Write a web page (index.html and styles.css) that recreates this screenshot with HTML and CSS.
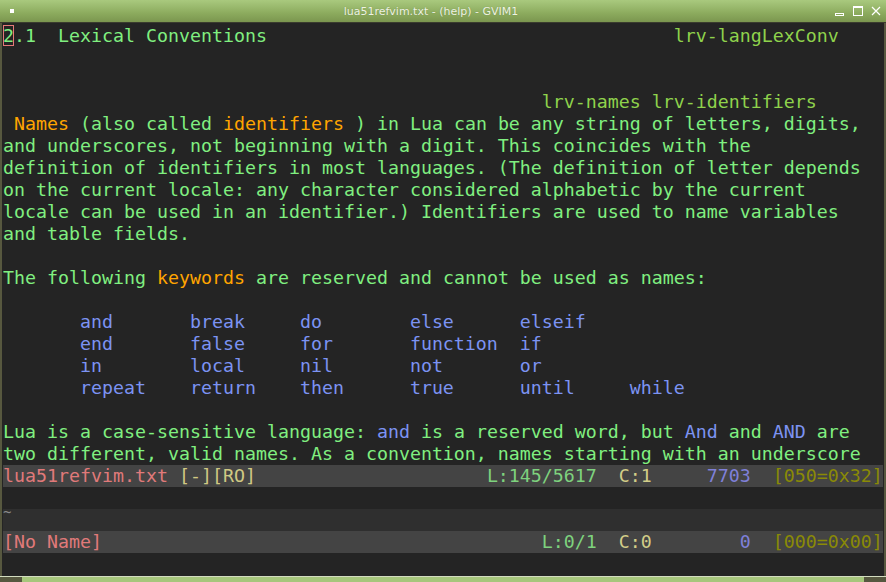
FILE: index.html
```html
<!DOCTYPE html>
<html>
<head>
<meta charset="utf-8">
<title>GVIM</title>
<link rel="stylesheet" href="styles.css">
</head>
<body>
<div class="win">
  <div class="titlebar">
    <div class="tb-left"><span class="appicon"></span></div>
    <div class="tb-title">lua51refvim.txt - (help) - GVIM1</div>
    <div class="tb-buttons">
      <svg class="btn" width="12" height="12" viewBox="0 0 12 12"><rect x="1.5" y="8.5" width="8" height="2" fill="none" stroke="#fff" stroke-width="1"/></svg>
      <svg class="btn" width="12" height="12" viewBox="0 0 12 12"><rect x="1.5" y="1.5" width="9" height="9" fill="none" stroke="#fff" stroke-width="1"/><line x1="1.5" y1="2.5" x2="10.5" y2="2.5" stroke="#fff" stroke-width="1"/></svg>
      <svg class="btn" width="12" height="12" viewBox="0 0 12 12"><path d="M2 2 L10 10 M10 2 L2 10" stroke="#fff" stroke-width="1.2"/></svg>
    </div>
  </div>
  <div class="main">
    <div class="pane">
<div class="row"><span class="cursor">2</span>.1  Lexical Conventions                                     <span class="tag">lrv-langLexConv</span></div>
<div class="row"></div>
<div class="row"></div>
<div class="row">                                                 <span class="tag">lrv-names lrv-identifiers</span></div>
<div class="row"> <span class="hl">Names</span> (also called <span class="hl">identifiers</span> ) in Lua can be any string of letters, digits,</div>
<div class="row">and underscores, not beginning with a digit. This coincides with the</div>
<div class="row">definition of identifiers in most languages. (The definition of letter depends</div>
<div class="row">on the current locale: any character considered alphabetic by the current</div>
<div class="row">locale can be used in an identifier.) Identifiers are used to name variables</div>
<div class="row">and table fields.</div>
<div class="row"></div>
<div class="row">The following <span class="hl">keywords</span> are reserved and cannot be used as names:</div>
<div class="row"></div>
<div class="row kw">       and       break     do        else      elseif</div>
<div class="row kw">       end       false     for       function  if</div>
<div class="row kw">       in        local     nil       not       or</div>
<div class="row kw">       repeat    return    then      true      until     while</div>
<div class="row"></div>
<div class="row">Lua is a case-sensitive language: <span class="k">and</span> is a reserved word, but <span class="k">And</span> and <span class="k">AND</span> are</div>
<div class="row">two different, valid names. As a convention, names starting with an underscore</div>
    </div>
    <div class="row status"><span class="fname">lua51refvim.txt</span><span class="flags"> [-][RO]</span>                     <span class="pos">L:145/5617</span>  <span class="col">C:1</span>     <span class="num">7703</span>  <span class="chr">[050=0x32]</span></div>
    <div class="row"></div>
    <div class="row tilde"><span class="tl">~</span></div>
    <div class="row status"><span class="fname">[No Name]</span>                                        <span class="pos">L:0/1</span>  <span class="col">C:0</span>        <span class="num">0</span>  <span class="chr">[000=0x00]</span></div>
    <div class="row"></div>
  </div>
  <div class="bottom"><span class="bl"></span><span class="bm"></span><span class="br"></span></div>
</div>
</body>
</html>
```
FILE: styles.css
```css
html, body {
  margin: 0;
  padding: 0;
  background: #56573f;
}
.win {
  width: 886px;
  height: 582px;
  display: flex;
  flex-direction: column;
  overflow: hidden;
}
.titlebar {
  height: 22px;
  flex: none;
  display: flex;
  align-items: center;
  background: linear-gradient(#a9c97e, #8cab5e 60%, #7b964f);
  border-bottom: 1px solid #3a3c2e;
}
.tb-left {
  width: 22px;
  display: flex;
  justify-content: center;
  align-items: center;
}
.appicon {
  width: 4px;
  height: 4px;
  background: #fff;
  margin-left: 2px;
}
.tb-title {
  flex: 1;
  text-align: center;
  font-family: "DejaVu Sans", sans-serif;
  font-size: 11px;
  color: #eef3e2;
  text-shadow: 0 0 1px rgba(60,80,30,0.4);
  padding-left: 6px;
}
.tb-buttons {
  width: 52px;
  display: flex;
  gap: 6px;
  align-items: center;
}
.btn { display: block; }
.main {
  flex: 1;
  background: #242424;
  border-left: 2px solid #57583f;
  border-right: 2px solid #57583f;
  padding: 2px 1px 0 1px;
  display: flex;
  flex-direction: column;
}
.pane { display: flex; flex-direction: column; }
.row {
  height: 22px;
  line-height: 22px;
  white-space: pre;
  font-family: "DejaVu Sans Mono", monospace;
  font-size: 18.27px;
  color: #80ef80;
  overflow: hidden;
}
.cursor {
  outline: 1px solid #e57878;
  outline-offset: -1px;
}
.tag { color: #8fd24c; }
.hl { color: #ffa500; }
.kw, .k { color: #7c93f2; }
.status { background: #444444; }
.fname { color: #e07a7a; }
.flags { color: #d0c983; }
.pos { color: #7ed27e; }
.col { color: #d2cd88; }
.num { color: #7f80d8; }
.chr { color: #8a8a06; }
.tilde {
  background: #2f2f2f;
  color: #8a8a8a;
  display: flex;
  align-items: flex-start;
  overflow: visible;
}
.tl {
  display: block;
  line-height: 22px;
  margin-top: -8px;
  font-size: 14px;
}
.bottom {
  height: 5px;
  flex: none;
  border-top: 1px solid #d3dcc0;
  display: flex;
}
.bl { width: 22px; background: #56573f; }
.bm { flex: 1; background: #a6c67c; }
.br { width: 22px; background: #56573f; }
```
